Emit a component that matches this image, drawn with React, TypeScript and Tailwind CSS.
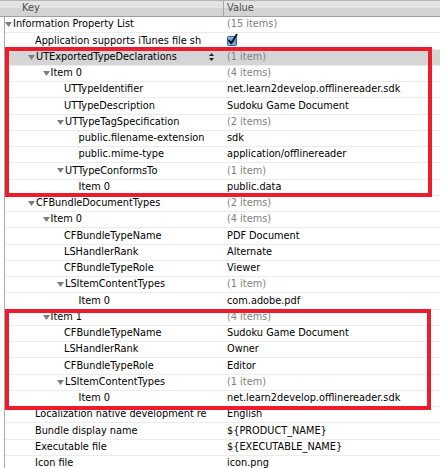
import React from "react";

type Row = {
  key: string;
  value?: string;
  level: number;
  expand?: boolean;
  muted?: boolean;
  check?: boolean;
  selected?: boolean;
};

const rows: Row[] = [
  { key: "Information Property List", value: "(15 items)", level: 0, expand: true, muted: true },
  { key: "Application supports iTunes file sh", level: 1, check: true },
  { key: "UTExportedTypeDeclarations", value: "(1 item)", level: 1, expand: true, muted: true, selected: true },
  { key: "Item 0", value: "(4 items)", level: 2, expand: true, muted: true },
  { key: "UTTypeIdentifier", value: "net.learn2develop.offlinereader.sdk", level: 3 },
  { key: "UTTypeDescription", value: "Sudoku Game Document", level: 3 },
  { key: "UTTypeTagSpecification", value: "(2 items)", level: 3, expand: true, muted: true },
  { key: "public.filename-extension", value: "sdk", level: 4 },
  { key: "public.mime-type", value: "application/offlinereader", level: 4 },
  { key: "UTTypeConformsTo", value: "(1 item)", level: 3, expand: true, muted: true },
  { key: "Item 0", value: "public.data", level: 4 },
  { key: "CFBundleDocumentTypes", value: "(2 items)", level: 1, expand: true, muted: true },
  { key: "Item 0", value: "(4 items)", level: 2, expand: true, muted: true },
  { key: "CFBundleTypeName", value: "PDF Document", level: 3 },
  { key: "LSHandlerRank", value: "Alternate", level: 3 },
  { key: "CFBundleTypeRole", value: "Viewer", level: 3 },
  { key: "LSItemContentTypes", value: "(1 item)", level: 3, expand: true, muted: true },
  { key: "Item 0", value: "com.adobe.pdf", level: 4 },
  { key: "Item 1", value: "(4 items)", level: 2, expand: true, muted: true },
  { key: "CFBundleTypeName", value: "Sudoku Game Document", level: 3 },
  { key: "LSHandlerRank", value: "Owner", level: 3 },
  { key: "CFBundleTypeRole", value: "Editor", level: 3 },
  { key: "LSItemContentTypes", value: "(1 item)", level: 3, expand: true, muted: true },
  { key: "Item 0", value: "net.learn2develop.offlinereader.sdk", level: 4 },
  { key: "Localization native development re", value: "English", level: 1 },
  { key: "Bundle display name", value: "${PRODUCT_NAME}", level: 1 },
  { key: "Executable file", value: "${EXECUTABLE_NAME}", level: 1 },
  { key: "Icon file", value: "icon.png", level: 1 },
];

const triPad: Record<number, string> = {
  0: "pl-0",
  1: "pl-[23px]",
  2: "pl-[37.5px]",
  3: "pl-[52px]",
};

const textPad: Record<number, string> = {
  0: "pl-[7px]",
  1: "pl-[30px]",
  2: "pl-[44.5px]",
  3: "pl-[59px]",
  4: "pl-[73.5px]",
};

function Triangle() {
  return (
    <svg width="7" height="5" viewBox="0 0 7 5" className="shrink-0 mr-[1px]">
      <polygon points="0,0 7,0 3.5,5" fill="#7d7d7d" />
    </svg>
  );
}

function Checkbox() {
  return (
    <svg width="11" height="12" viewBox="0 0 11 12" className="mt-[-2px]">
      <defs>
        <linearGradient id="cbg" x1="0" y1="0" x2="0" y2="1">
          <stop offset="0" stopColor="#9cc4f2" />
          <stop offset="0.5" stopColor="#4f8fe0" />
          <stop offset="1" stopColor="#86bbf1" />
        </linearGradient>
      </defs>
      <rect x="0.5" y="2.5" width="9" height="9" rx="1" fill="url(#cbg)" stroke="#35588d" />
      <path d="M2.2 6.6 L4.3 9.3 L9.6 0.8" fill="none" stroke="#0d0d0d" strokeWidth="1.8" strokeLinecap="round" strokeLinejoin="round" />
    </svg>
  );
}

function Stepper() {
  return (
    <div className="absolute right-[10px] top-0 h-full flex flex-col items-center justify-center gap-[2px]">
      <svg width="5" height="3" viewBox="0 0 5 3">
        <polygon points="2.5,0 5,3 0,3" fill="#222" />
      </svg>
      <svg width="5" height="3" viewBox="0 0 5 3">
        <polygon points="0,0 5,0 2.5,3" fill="#222" />
      </svg>
    </div>
  );
}

export default function App() {
  return (
    <div
      className="relative w-[448px] h-[468px] overflow-hidden bg-white text-[9.75px] text-black"
      style={{ fontFamily: '"DejaVu Sans", "Liberation Sans", sans-serif' }}
    >
      {/* header */}
      <div className="flex w-[440px] h-[17px] border-t border-[#b4b4b4] border-b border-b-[#a0a0a0] bg-[linear-gradient(to_bottom,#e3e3e3_0%,#e3e3e3_45%,#d3d3d3_50%,#d3d3d3_100%)] text-[#4e4e4e]">
        <div className="w-[224px] h-full flex items-center pl-[22px] border-r border-[#a8a8a8]">Key</div>
        <div className="flex-1 h-full flex items-center pl-[3px]">Value</div>
      </div>

      {/* body */}
      <div className="ml-[4px] w-[436px] border-l border-[#a9a9a9]">
        {rows.map((r, i) => (
          <div
            key={i}
            className={`flex h-[16.25px] border-b border-[#ececec] ${r.selected ? "bg-[#d5d5d5]" : "bg-white"}`}
          >
            <div
              className={`relative w-[219px] shrink-0 h-full flex items-center overflow-hidden whitespace-nowrap ${
                r.expand ? triPad[r.level] : textPad[r.level]
              }`}
            >
              {r.expand && <Triangle />}
              <span>{r.key}</span>
              {r.selected && <Stepper />}
            </div>
            <div
              className={`flex-1 h-full flex items-center pl-[3px] whitespace-nowrap overflow-hidden ${
                r.muted ? "text-[#808080]" : "text-black"
              }`}
            >
              {r.check ? <Checkbox /> : r.value}
            </div>
          </div>
        ))}
      </div>

      {/* red highlight boxes */}
      <div className="absolute left-[5px] top-[47px] w-[427px] h-[150px] border-4 border-[#ee1b2d]" />
      <div className="absolute left-[5px] top-[309px] w-[426px] h-[101px] border-4 border-[#ee1b2d]" />
    </div>
  );
}
